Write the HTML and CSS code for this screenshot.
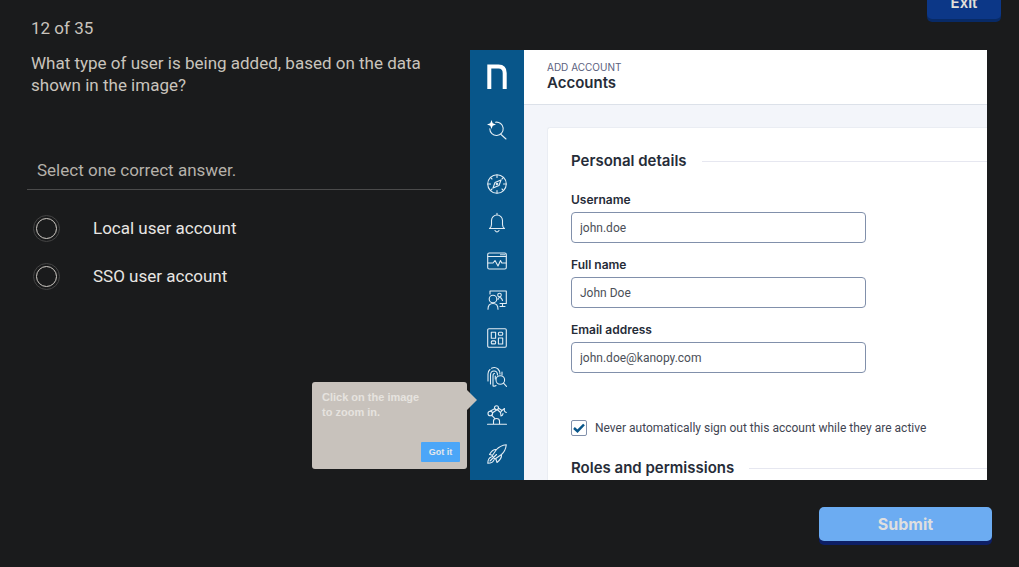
FILE: index.html
```html
<!DOCTYPE html>
<html lang="en">
<head>
<meta charset="utf-8">
<meta name="viewport" content="width=device-width, initial-scale=1">
<title>Question 12 of 35</title>
<link rel="stylesheet" href="styles.css">
</head>
<body>
<main class="quiz">
  <section class="question">
    <p class="progress">12 of 35</p>
    <h1 class="prompt">What type of user is being added, based on the data shown in the image?</h1>
    <fieldset class="answers">
      <legend class="hint">Select one correct answer.</legend>
      <label class="answer"><input class="radio" type="radio" name="answer"><span>Local user account</span></label>
      <label class="answer"><input class="radio" type="radio" name="answer"><span>SSO user account</span></label>
    </fieldset>
  </section>

  <section class="stage">
    <button class="exit" type="button">Exit</button>

    <div class="figure">
      <div class="app">
        <nav class="sidebar" aria-label="Main">
          <svg class="logo" viewBox="0 0 20 26"><path d="M2.300 25V2.500H11.500Q17.700 2.500 17.700 9V25"/></svg>
          <svg class="icon search" viewBox="0 0 20 20"><path d="M8.500 2.200A6.700 6.700 0 1 1 2.800 8.800M13.500 14L19 19"/><path class="solid" d="M4.500 0L5.700 3.300L9 4.500L5.700 5.700L4.500 9L3.300 5.700L0 4.500L3.300 3.300Z"/></svg>
          <div class="menu">
            <svg class="icon" viewBox="0 0 20 20"><circle cx="10" cy="10" r="9.300"/><path d="M10 1v2.500M10 16.500V19M1 10h2.500M16.500 10H19M3.700 3.700l1.300 1.300M15 15l1.300 1.300M3.700 16.300L5 15M15 5l1.300-1.300M14 6L12 11.500L6 14L8 8.500Z"/><circle cx="10" cy="10" r=".800"/></svg>
            <svg class="icon" viewBox="0 0 20 20"><path d="M2.500 15.500H17.500Q15.500 14 15.500 11.500V7.500A5.500 5.500 0 0 0 4.500 7.500V11.500Q4.500 14 2.500 15.500ZM10 2V.300M8 17.500Q10 20.300 12 17.500"/></svg>
            <svg class="icon" viewBox="0 0 20 20"><rect x=".700" y="2" width="18.600" height="16" rx="1.500"/><path d="M1 5.500H19M13.500 3.800h1M15.500 3.800h1M17.300 3.800h.700M1 12H6L8 9.500L11 15L13.500 9.500L14.800 12H19"/></svg>
            <svg class="icon" viewBox="0 0 20 20"><path d="M3 4V1H19.300V13.500H13M15.500 13.500V16.500M13 16.500H18M1 19.300Q1 13.500 6 13.500T11 19.300"/><circle cx="6" cy="9" r="3.800"/><circle cx="12.500" cy="5" r="1.800"/><path d="M11 9.500Q11 7.500 12.800 7.500T15.500 10.500"/></svg>
            <svg class="icon" viewBox="0 0 20 20"><rect x=".700" y=".700" width="18.600" height="18.600" rx="1.200"/><rect x="4.300" y="4.300" width="4.300" height="6"/><rect x="11.400" y="4.300" width="4.300" height="3" rx="1"/><rect x="4.300" y="12.900" width="4.300" height="3" rx="1"/><rect x="11.400" y="10" width="4.300" height="6"/></svg>
            <svg class="icon" viewBox="0 0 20 20"><path d="M1 14V7Q1 4 3 2.500M4.500 1.300Q8 -.500 11 2Q13 4 13 7M3.500 17V8Q3.500 4 7 4Q10.500 4 10.500 8M6 18.500V9Q6 6.500 7.500 6.500M8.300 9V12M6 19Q8 19.500 9 18.500M15 5V8"/><circle cx="13.300" cy="13" r="4.300"/><path d="M16.500 16.200L19.500 19.300"/></svg>
            <svg class="icon" viewBox="0 0 20 20"><path d="M.500 19.300H19.500M6.500 19V16Q6.500 13.500 9.500 13.500T12.500 16V19M8 13.700L4.500 10.200M3 6.300L8 3.500M5.300 8L10 4.800M11.300 3L15 5.500M10.300 4.500L13.500 7.500M17.500 3.500L15 5.500L13.500 7.500L14 11M17.500 3.500Q16.500 6.500 19.300 7.500M14 11Q16 10.500 16 8.500"/><circle cx="3.300" cy="8.500" r="2.300"/><circle cx="9.500" cy="2.800" r="2"/></svg>
            <svg class="icon" viewBox="0 0 20 20"><path d="M19.300.700Q13 1.500 9.500 5.500L5 12L8 15L14.500 10.500Q18.500 7 19.300.700ZM9.500 5.500Q5.500 5 2.500 10.500L5.500 11.300M14.500 10.500Q15 14.500 10 18.500L8.800 14.500M4.300 13Q1 14 .800 19.200Q6 19 7 15.800M3 17L9.500 10.500"/></svg>
          </div>
        </nav>
        <div class="page">
          <header class="topbar">
            <div class="crumb">ADD ACCOUNT</div>
            <h2 class="title">Accounts</h2>
          </header>
          <form class="card">
            <h3 class="section">Personal details</h3>
            <div class="fields">
              <div class="field"><label for="username">Username</label><input class="text" id="username" type="text" value="john.doe"></div>
              <div class="field"><label for="fullname">Full name</label><input class="text" id="fullname" type="text" value="John Doe"></div>
              <div class="field"><label for="email">Email address</label><input class="text" id="email" type="text" value="john.doe@kanopy.com"></div>
            </div>
            <div class="check">
              <span class="tick"><input class="box" id="stay" type="checkbox" checked><svg class="mark" viewBox="0 0 16 16"><path d="M3 8L6.500 11.200L13 4.500"/></svg></span>
              <label for="stay">Never automatically sign out this account while they are active</label>
            </div>
            <h3 class="section">Roles and permissions</h3>
          </form>
        </div>
      </div>
      <aside class="tip">
        <p class="tip-text">Click on the image<br>to zoom in.</p>
        <button class="got" type="button">Got it</button>
      </aside>
    </div>

    <button class="submit" type="button">Submit</button>
  </section>
</main>
</body>
</html>
```
FILE: styles.css
```css
* { box-sizing: border-box; }
body, p, h1, h2, h3, fieldset { margin: 0; }
body {
  background: #1a1b1c;
  color: #c9c4bc;
  font-family: Roboto, "Open Sans", sans-serif;
  font-size: 17px;
}
button { border: 0; font-family: Inter, sans-serif; cursor: pointer; }

.quiz {
  display: grid;
  grid-template-columns: minmax(0, 414fr) minmax(0, 531fr);
  gap: 29px;
  padding: 0 18px 0 27px;
}

.question { padding-top: 17px; }
.progress { padding-left: 4px; line-height: 22px; }
.prompt {
  margin-top: 13px;
  padding-left: 4px;
  font-size: 17px;
  font-weight: 400;
  line-height: 22px;
}
.answers { border: 0; padding: 0; min-width: 0; margin-top: 62px; }
.hint {
  width: 100%;
  padding: 0 10px 7px;
  border-bottom: 1px solid #4b4b4b;
  line-height: 24px;
  margin-bottom: 14px;
  color: #b5b1aa;
}
.answer {
  display: flex;
  align-items: center;
  gap: 33px;
  height: 48px;
  padding-left: 6px;
  color: #e8e6e3;
}
.radio {
  appearance: none;
  display: grid;
  flex: none;
  width: 27px;
  height: 27px;
  margin: 0;
  border: 1px solid #444;
  border-radius: 50%;
  padding: 2px;
}
.radio::before {
  content: "";
  border: 1px solid #d0ccc6;
  border-radius: 50%;
}
.radio:checked::before { background: #4ba6f8; }

.stage { display: flex; flex-direction: column; }
.exit {
  align-self: flex-end;
  width: 74px;
  height: 34px;
  margin-top: -15px;
  border-radius: 5px;
  background: #0c3787;
  box-shadow: 0 3px #082a66;
  color: #e4e0da;
  font-size: 15px;
  font-weight: 600;
}
.submit {
  align-self: flex-end;
  width: 173px;
  height: 34px;
  margin: 27px 9px 20px 0;
  border-radius: 5px;
  background: #6cacf2;
  box-shadow: 0 4px #0d1f66;
  color: #dedfe0;
  font-size: 16px;
  font-weight: 700;
}

.figure { position: relative; margin: 31px 14px 0 0; }
.app {
  display: flex;
  overflow: hidden;
  background: #fff;
  font-family: Inter, sans-serif;
  color: #262c38;
}
.sidebar {
  display: flex;
  flex-direction: column;
  align-items: center;
  flex: none;
  width: 54px;
  padding: 14px 0 16px;
  background: #08568a;
}
.logo { width: 20px; height: 26px; fill: none; stroke: #fff; stroke-width: 4; }
.icon {
  width: 20px;
  height: 20px;
  overflow: visible;
  fill: none;
  stroke: #e3edf4;
  stroke-width: 1.1;
  stroke-linejoin: round;
  stroke-linecap: round;
}
.solid { fill: #fff; stroke: none; }
.search { margin: 30px 0 34px; }
.menu { display: flex; flex: 1; flex-direction: column; justify-content: space-between; }

.page { flex: 1; min-width: 0; background: #f3f5fa; }
.topbar {
  height: 55px;
  padding: 11px 23px 0;
  border-bottom: 1px solid #dce1e9;
  background: #fff;
}
.crumb { color: #5a607d; font-size: 10px; line-height: 12px; }
.title { font-size: 15px; font-weight: 600; line-height: 20px; }
.card {
  margin: 22px 0 0 23px;
  padding: 23px 0 2px 23px;
  border: solid #eaedf3;
  border-width: 1px 0 0 1px;
  border-radius: 3px 0 0;
  background: #fff;
}
.section {
  display: flex;
  align-items: center;
  gap: 15px;
  font-size: 15px;
  font-weight: 600;
  line-height: 20px;
  white-space: nowrap;
}
.section::after { content: ""; flex: 1; border-top: 1px solid #e6e7f0; }
.fields {
  display: grid;
  gap: 14px;
  width: 72%;
  max-width: 295px;
  margin: 21px 0 47px;
}
.field { display: grid; gap: 4px; font-size: 12px; font-weight: 600; line-height: 16px; }
.text {
  width: 100%;
  height: 31px;
  padding: 0 8px;
  border: 1px solid #8190ab;
  border-radius: 4px;
  background: #fff;
  color: #4b4f58;
  font: 12px Roboto, sans-serif;
}
.check {
  display: flex;
  align-items: center;
  gap: 8px;
  margin-bottom: 22px;
  color: #3f4552;
  font: 12px/16px Roboto, sans-serif;
  white-space: nowrap;
}
.tick { display: grid; flex: none; }
.box, .mark { grid-area: 1 / 1; width: 16px; height: 16px; margin: 0; }
.box { appearance: none; border: 1px solid #8190ab; border-radius: 2px; }
.mark { fill: none; stroke: #08568a; stroke-width: 2.5; pointer-events: none; visibility: hidden; }
.box:checked + .mark { visibility: visible; }

.tip {
  position: absolute;
  top: 332px;
  left: -158px;
  display: flex;
  flex-direction: column;
  justify-content: space-between;
  width: 155px;
  height: 87px;
  padding: 8px 7px 7px 10px;
  border-radius: 3px;
  background: #c8c2bc;
}
.tip::after {
  content: "";
  position: absolute;
  top: 8px;
  left: 100%;
  border: 10px solid transparent;
  border-left-color: #c8c2bc;
  border-right: 0;
}
.tip-text { color: #e6e3df; font: 700 11px/15px "Liberation Sans", sans-serif; }
.got {
  align-self: flex-end;
  width: 39px;
  height: 20px;
  padding: 0;
  border-radius: 1px;
  background: #4ba6f8;
  color: #e4e8ec;
  font: 700 9px "Liberation Sans", sans-serif;
}
```
